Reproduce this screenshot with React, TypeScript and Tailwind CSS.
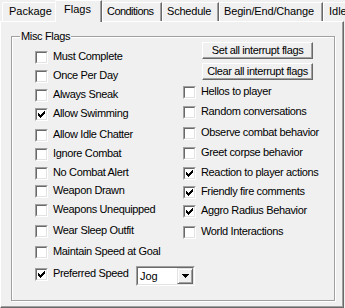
import React from "react";

function Box({ checked }: { checked?: boolean }) {
  return (
    <div className="w-[13px] h-[13px] shrink-0 border-t border-l border-t-[#a0a0a0] border-l-[#a0a0a0] border-r border-b border-r-white border-b-white">
      <div className="w-full h-full bg-white border-t border-l border-t-[#696969] border-l-[#696969] border-r border-b border-r-[#e3e3e3] border-b-[#e3e3e3]">
        {checked && (
          <svg width="9" height="9" viewBox="0 0 9 9" shapeRendering="crispEdges">
            <path
              d="M1 3h1v3H1z M2 4h1v3H2z M3 5h1v3H3z M4 4h1v3H4z M5 3h1v3H5z M6 2h1v3H6z M7 1h1v3H7z"
              fill="#000"
            />
          </svg>
        )}
      </div>
    </div>
  );
}

function Check({
  label,
  checked,
  cls,
}: {
  label: string;
  checked?: boolean;
  cls: string;
}) {
  return (
    <div className={`flex items-start ${cls}`}>
      <Box checked={checked} />
      <span className="ml-[5px] leading-[11px] whitespace-nowrap tracking-[-0.35px]">{label}</span>
    </div>
  );
}

function Btn({ label }: { label: string }) {
  return (
    <div className="w-[111px] h-[17px] border-t border-l border-t-white border-l-white border-r border-b border-r-[#696969] border-b-[#696969] shadow-[inset_-1px_-1px_0_#a0a0a0] flex items-center justify-center leading-[13px] whitespace-nowrap tracking-[-0.38px]">
      {label}
    </div>
  );
}

export default function App() {
  return (
    <div className="w-[345px] h-[308px] bg-[#f0f0f0] overflow-hidden text-[11px] text-black font-['Liberation_Sans',Arial,sans-serif]">
      {/* Tab strip */}
      <div className="flex items-end h-[21px] whitespace-nowrap">
        <div className="shrink-0 ml-[2px] w-[55px] h-[19px] border-t border-l border-white border-r border-r-[#696969] shadow-[inset_-1px_0_0_#a0a0a0] rounded-tl-[2px] leading-[17px] pl-[6px]">
          Package
        </div>
        <div className="shrink-0 relative z-10 -ml-[2px] -mb-[1px] w-[47px] h-[22px] bg-[#f0f0f0] border-t border-l border-white border-r border-r-[#696969] shadow-[inset_-1px_0_0_#a0a0a0] rounded-tl-[2px] leading-[17px] pl-[8px]">
          Flags
        </div>
        <div className="shrink-0 w-[60px] h-[19px] border-t border-l border-white border-r border-r-[#696969] shadow-[inset_-1px_0_0_#a0a0a0] rounded-tl-[2px] leading-[17px] pl-[4px] tracking-[-0.55px]">
          Conditions
        </div>
        <div className="shrink-0 w-[57px] h-[19px] border-t border-l border-white border-r border-r-[#696969] shadow-[inset_-1px_0_0_#a0a0a0] rounded-tl-[2px] leading-[17px] pl-[4px] tracking-[-0.2px]">
          Schedule
        </div>
        <div className="shrink-0 w-[104px] h-[19px] border-t border-l border-white border-r border-r-[#696969] shadow-[inset_-1px_0_0_#a0a0a0] rounded-tl-[2px] leading-[17px] pl-[4px] tracking-[-0.15px]">
          Begin/End/Change
        </div>
        <div className="shrink-0 w-[40px] h-[19px] border-t border-l border-white border-r border-r-[#696969] rounded-tl-[2px] leading-[17px] pl-[5px]">
          Idle
        </div>
      </div>

      {/* Panel */}
      <div className="w-[344px] h-[287px] border-t border-l border-white border-r border-b border-r-[#696969] border-b-[#696969] shadow-[inset_-1px_-1px_0_#a0a0a0] pl-[10px] pt-[14px]">
        {/* Group box */}
        <div className="relative w-[324px] h-[265px] border border-[#a0a0a0] shadow-[inset_1px_1px_0_#fff,1px_1px_0_#fff] flex">
          <span className="absolute left-[8px] -top-[7px] px-[1px] bg-[#f0f0f0] leading-[13px] whitespace-nowrap tracking-[-0.35px]">
            Misc Flags
          </span>

          {/* Left column */}
          <div className="shrink-0 ml-[23px] pt-[14px] w-[148px] flex flex-col">
            <Check label="Must Complete" cls="h-[19px]" />
            <Check label="Once Per Day" cls="h-[19px]" />
            <Check label="Always Sneak" cls="h-[19px]" />
            <Check label="Allow Swimming" checked cls="h-[21px]" />
            <Check label="Allow Idle Chatter" cls="h-[19px]" />
            <Check label="Ignore Combat" cls="h-[19px]" />
            <Check label="No Combat Alert" cls="h-[18px]" />
            <Check label="Weapon Drawn" cls="h-[19px]" />
            <Check label="Weapons Unequipped" cls="h-[21px]" />
            <Check label="Wear Sleep Outfit" cls="h-[21px]" />
            <Check label="Maintain Speed at Goal" cls="h-[22px]" />
            <div className="flex items-start">
              <Box checked />
              <span className="shrink-0 ml-[5px] w-[83px] leading-[11px] whitespace-nowrap tracking-[-0.35px]">
                Preferred Speed
              </span>
              <div className="shrink-0 -mt-[2px] w-[59px] h-[20px] border-t border-l border-t-[#a0a0a0] border-l-[#a0a0a0] border-r border-b border-r-white border-b-white">
                <div className="w-full h-full bg-white border-t border-l border-t-[#696969] border-l-[#696969] border-r border-b border-r-[#e3e3e3] border-b-[#e3e3e3] flex">
                  <span className="flex-1 pl-[2px] leading-[16px]">Jog</span>
                  <div className="w-[16px] h-full bg-[#f0f0f0] border-t border-l border-t-[#e3e3e3] border-l-[#e3e3e3] border-r border-b border-r-[#696969] border-b-[#696969] shadow-[inset_1px_1px_0_#fff,inset_-1px_-1px_0_#a0a0a0] flex items-center justify-center">
                    <svg width="7" height="4" viewBox="0 0 7 4" shapeRendering="crispEdges">
                      <path d="M0 0h7v1H0z M1 1h5v1H1z M2 2h3v1H2z M3 3h1v1H3z" fill="#000" />
                    </svg>
                  </div>
                </div>
              </div>
            </div>
          </div>

          {/* Right column */}
          <div className="pt-[5px] flex flex-col">
            <div className="ml-[19px] flex flex-col gap-[4px]">
              <Btn label="Set all interrupt flags" />
              <Btn label="Clear all interrupt flags" />
            </div>
            <div className="mt-[6px] flex flex-col">
              <Check label="Hellos to player" cls="h-[20px]" />
              <Check label="Random conversations" cls="h-[21px]" />
              <Check label="Observe combat behavior" cls="h-[20px]" />
              <Check label="Greet corpse behavior" cls="h-[20px]" />
              <Check label="Reaction to player actions" checked cls="h-[19px]" />
              <Check label="Friendly fire comments" checked cls="h-[19px]" />
              <Check label="Aggro Radius Behavior" checked cls="h-[21px]" />
              <Check label="World Interactions" cls="h-[19px]" />
            </div>
          </div>
        </div>
      </div>
    </div>
  );
}
